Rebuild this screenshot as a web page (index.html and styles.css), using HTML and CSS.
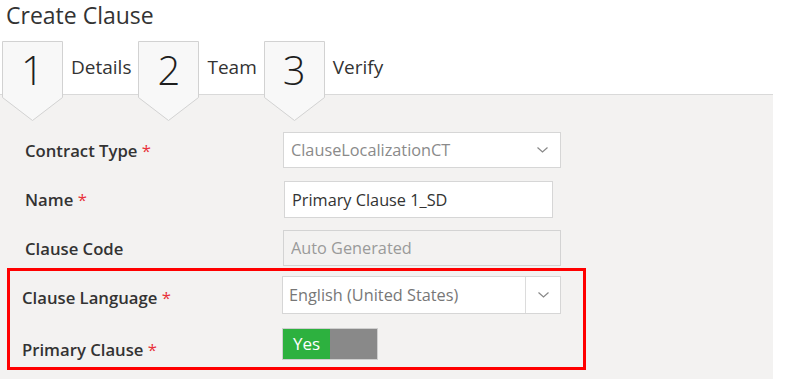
FILE: index.html
```html
<!DOCTYPE html>
<html lang="en">

<head>
    <meta charset="UTF-8">
    <meta name="viewport" content="width=device-width, initial-scale=1.0">
    <title>Create Clause</title>
    <link rel="stylesheet" href="styles.css">
</head>

<body>
    <h1 class="page-title">Create Clause</h1>

    <!-- wizard steps -->
    <div class="steps">
        <div class="step-badge">
            <svg class="badge-shape" width="61" height="80" viewBox="0 0 61 80">
                <polygon points="0.5,0.5 60.5,0.5 60.5,56.5 30.5,79.5 0.5,56.5" />
            </svg>
            <span class="step-num">1</span>
        </div>
        <div class="step-label">Details</div>
        <div class="step-badge">
            <svg class="badge-shape" width="61" height="80" viewBox="0 0 61 80">
                <polygon points="0.5,0.5 60.5,0.5 60.5,56.5 30.5,79.5 0.5,56.5" />
            </svg>
            <span class="step-num">2</span>
        </div>
        <div class="step-label">Team</div>
        <div class="step-badge">
            <svg class="badge-shape" width="61" height="80" viewBox="0 0 61 80">
                <polygon points="0.5,0.5 60.5,0.5 60.5,56.5 30.5,79.5 0.5,56.5" />
            </svg>
            <span class="step-num">3</span>
        </div>
        <div class="step-label">Verify</div>
    </div>

    <div class="panel">
        <!-- Contract Type -->
        <div class="form-row">
            <label>Contract Type <span class="req">*</span></label>
            <div class="select-box wide">
                <span class="select-text">ClauseLocalizationCT</span>
                <svg class="chevron" width="11" height="6" viewBox="0 0 11 6">
                    <polyline points="0.5,0.5 5.5,5 10.5,0.5" />
                </svg>
            </div>
        </div>

        <!-- Name -->
        <div class="form-row">
            <label for="name">Name <span class="req">*</span></label>
            <input type="text" id="name" class="text-input name-input" value="Primary Clause 1_SD">
        </div>

        <!-- Clause Code -->
        <div class="form-row">
            <label for="code">Clause Code</label>
            <input type="text" id="code" class="text-input code-input" value="Auto Generated" disabled>
        </div>

        <!-- highlighted block -->
        <div class="highlight">
            <div class="form-row lang-row">
                <label>Clause Language <span class="req">*</span></label>
                <div class="select-box split">
                    <span class="select-text">English (United States)</span>
                    <span class="select-btn">
                        <svg class="chevron" width="11" height="6" viewBox="0 0 11 6">
                            <polyline points="0.5,0.5 5.5,5 10.5,0.5" />
                        </svg>
                    </span>
                </div>
            </div>
            <div class="form-row toggle-row">
                <label>Primary Clause <span class="req">*</span></label>
                <div class="toggle">
                    <span class="toggle-on">Yes</span>
                    <span class="toggle-off"></span>
                </div>
            </div>
        </div>
    </div>
</body>

</html>
```

FILE: styles.css
```css
body {
    font-family: "Open Sans", "Noto Sans", sans-serif;
    background-color: #fff;
    color: #333;
    margin: 0;
}

.page-title {
    font-size: 23px;
    font-weight: 400;
    line-height: 30px;
    margin: 0;
    padding-left: 6px;
    color: #333;
}

/* steps */
.steps {
    display: flex;
    align-items: flex-start;
    margin-top: 11px;
    padding-left: 2px;
    height: 53px;
}

.step-badge {
    position: relative;
    width: 61px;
    height: 80px;
    z-index: 2;
}

.badge-shape {
    position: absolute;
    left: 0;
    top: 0;
}

.badge-shape polygon {
    fill: #f8f8f8;
    stroke: #d2d2d2;
    stroke-width: 1;
}

.step-num {
    position: relative;
    display: block;
    text-align: center;
    font-size: 40px;
    font-weight: 300;
    line-height: 58px;
    color: #1e1e1e;
}

.step-label {
    font-size: 19px;
    line-height: 24px;
    padding: 14px 7px 0 8px;
    color: #333;
}

/* form panel */
.panel {
    width: 773px;
    height: 285px;
    box-sizing: border-box;
    background-color: #f3f2f1;
    border-top: 1px solid #d9d9d9;
    padding-top: 37px;
}

.form-row {
    display: grid;
    grid-template-columns: 258px auto;
    align-items: center;
    height: 36px;
    margin-bottom: 13px;
    padding-left: 25px;
}

.form-row label {
    font-size: 16.7px;
    font-weight: 600;
    color: #333;
}

.req {
    color: #e8303a;
    font-weight: 400;
}

.select-box {
    display: flex;
    align-items: center;
    justify-content: space-between;
    box-sizing: border-box;
    height: 36px;
    background-color: #fff;
    border: 1px solid #d6d6d6;
    font-size: 16.3px;
}

.select-box.wide {
    width: 278px;
    padding: 0 12px 0 7px;
    color: #8a8a8a;
}

.chevron polyline {
    fill: none;
    stroke: #888;
    stroke-width: 1.2;
}

.text-input {
    box-sizing: border-box;
    height: 36px;
    font-family: inherit;
    font-size: 16.3px;
    padding: 0 7px;
    border: 1px solid #d6d6d6;
    margin: 0;
}

.name-input {
    width: 269px;
    margin-left: 1px;
    height: 37px;
    color: #333;
    background-color: #fff;
}

.code-input {
    width: 278px;
    color: #9a9a9a;
    background-color: #f3f2f1;
    border-color: #d3d3d3;
}

/* red highlighted block */
.highlight {
    width: 579px;
    box-sizing: border-box;
    margin: -11px 0 0 7px;
    border: 3px solid #ff0000;
    padding: 5px 0 9px 12px;
}

.highlight .form-row {
    grid-template-columns: 260px auto;
    padding-left: 0;
    margin-bottom: 12px;
}

.lang-row {
    height: 38px;
}

.lang-row label {
    margin-top: 5px;
}

.select-box.split {
    width: 279px;
    height: 38px;
    padding-left: 6px;
    color: #777;
}

.select-btn {
    display: flex;
    align-items: center;
    justify-content: center;
    width: 34px;
    height: 100%;
    border-left: 1px solid #dcdcdc;
}

.toggle-row {
    height: 32px;
}

.highlight .toggle-row {
    margin-bottom: 0;
}

.toggle-row label {
    margin-top: 12px;
}

.toggle {
    display: flex;
    width: 96px;
    height: 32px;
    box-sizing: border-box;
    border: 1px solid #cfcfcf;
}

.toggle-on {
    width: 47px;
    background-color: #2db13f;
    color: #fff;
    font-size: 17px;
    line-height: 30px;
    text-align: center;
}

.toggle-off {
    flex: 1;
    background-color: #898989;
}
```
